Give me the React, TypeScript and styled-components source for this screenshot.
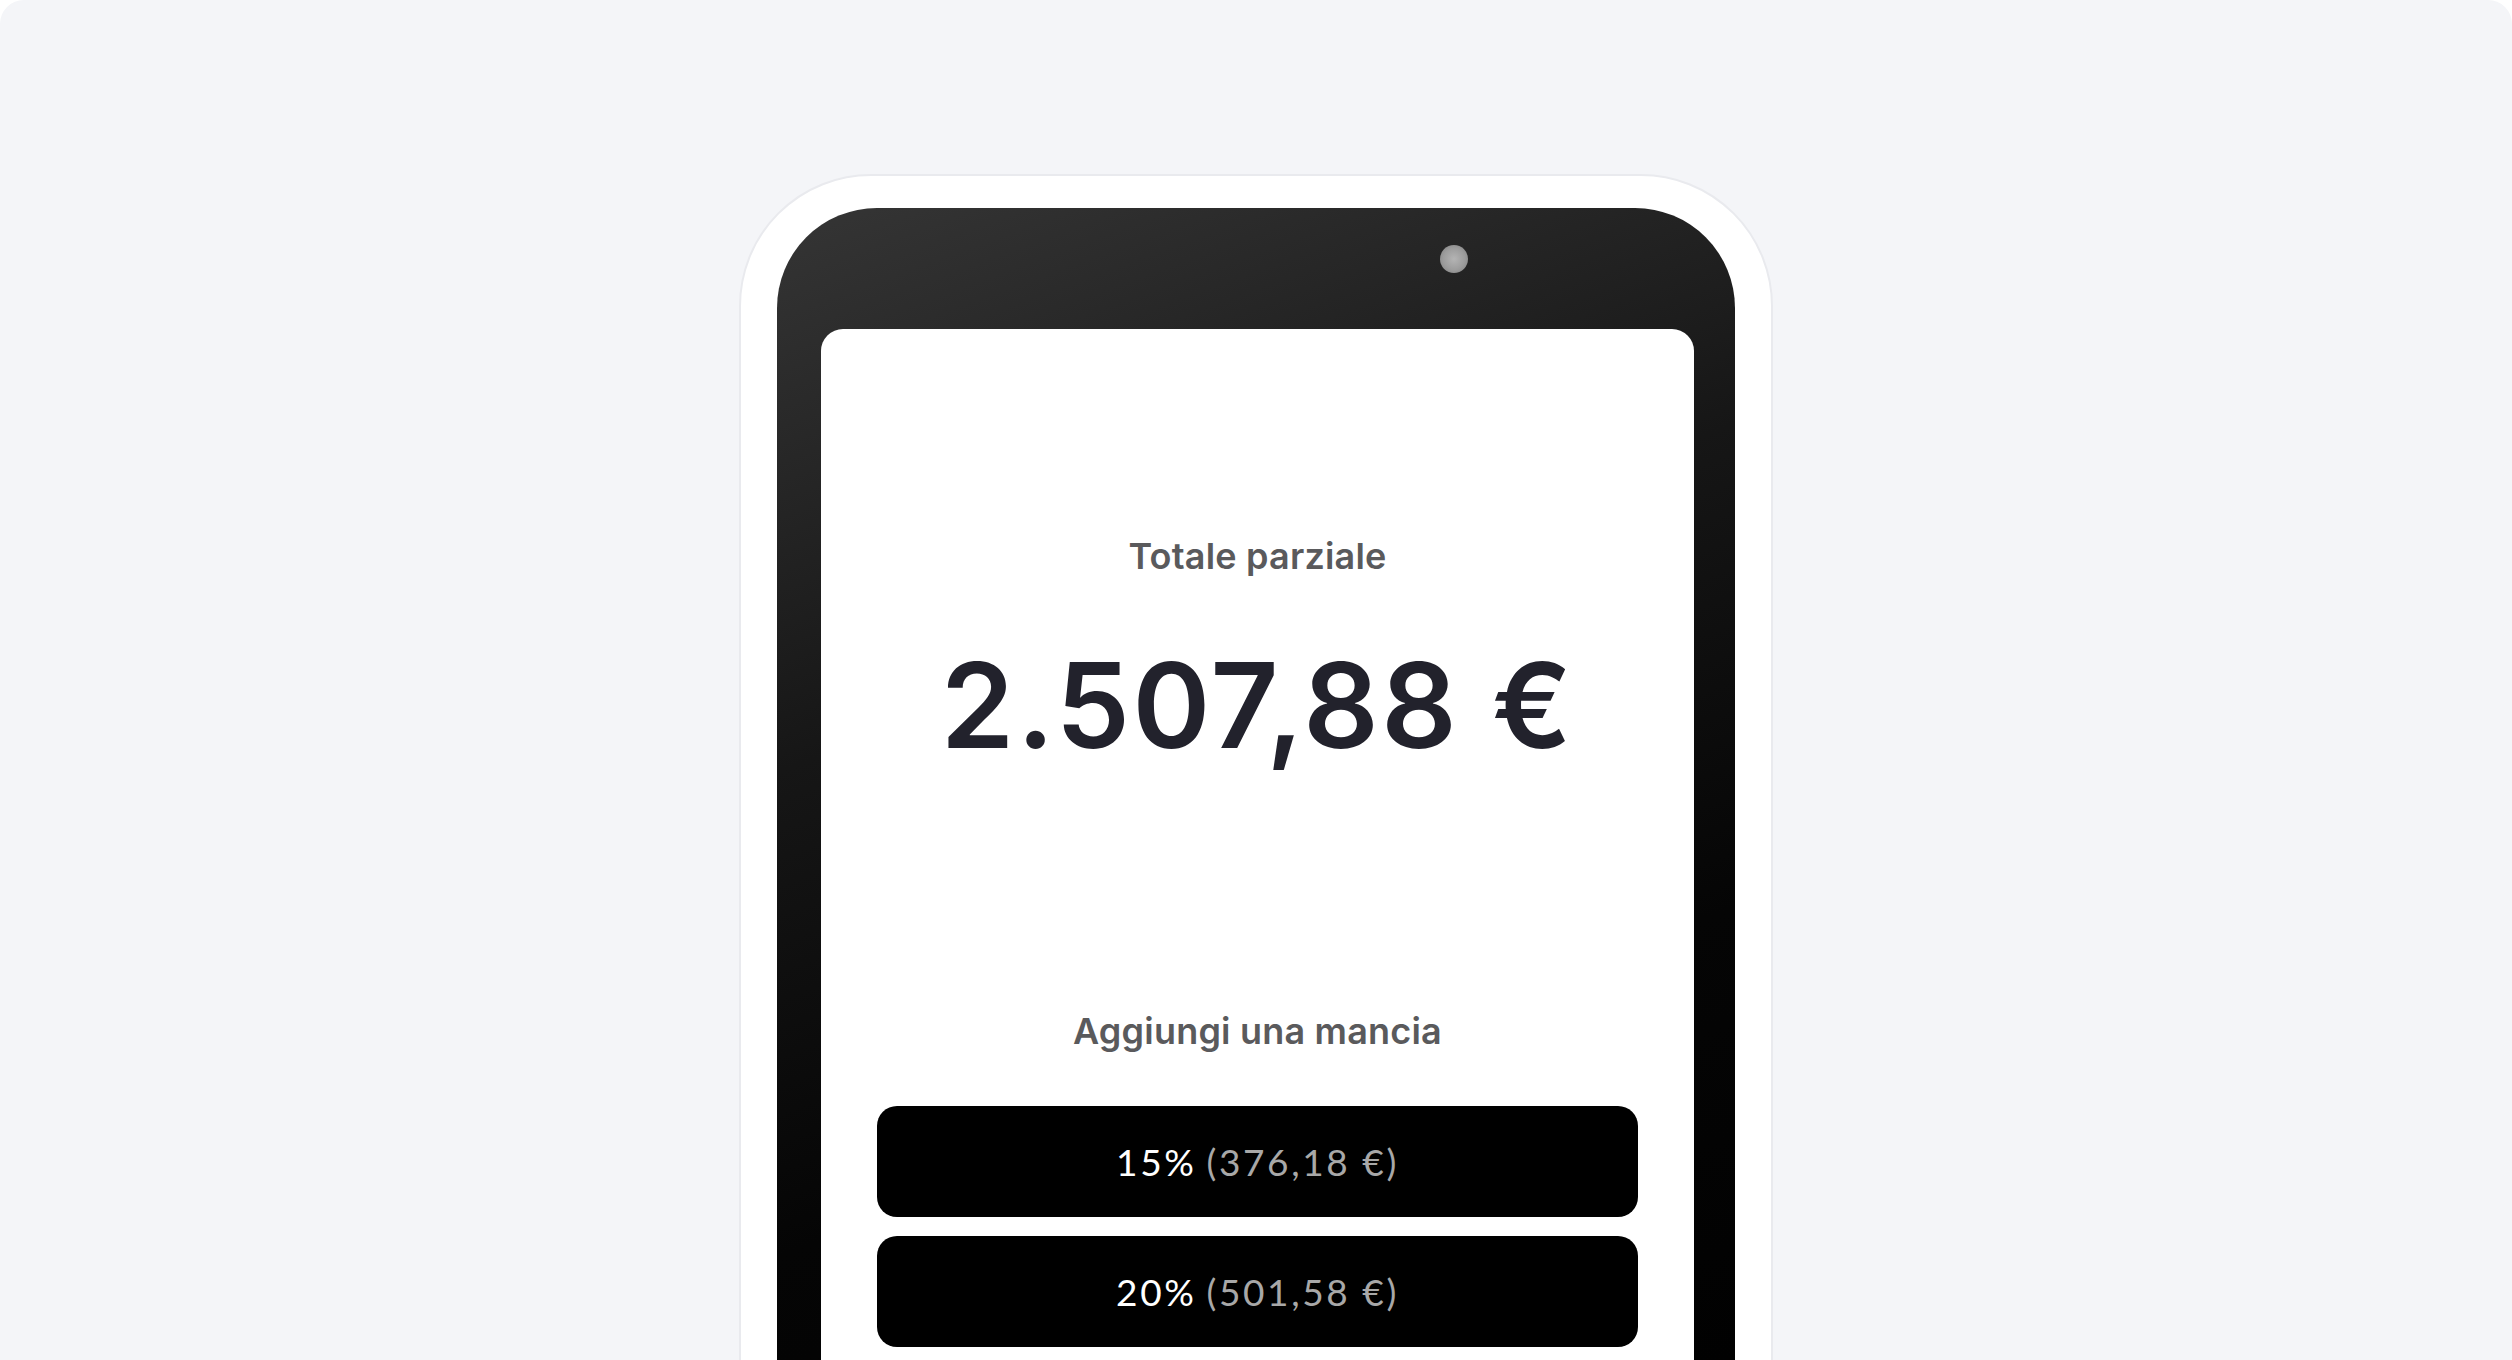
import React from "react";
import styled, { createGlobalStyle } from "styled-components";

const Global = createGlobalStyle`
  html, body { margin: 0; padding: 0; background: #ffffff; }
  body { font-family: Inter, "Noto Sans", sans-serif; }
  #root { width: 2512px; height: 1360px; }
`;

const Stage = styled.div`
  width: 2512px;
  height: 1360px;
  box-sizing: border-box;
  background: #f4f5f8;
  border-radius: 24px 24px 0 0;
  overflow: hidden;
  display: flex;
  justify-content: center;
  padding-top: 174px;
`;

const OuterShell = styled.div`
  width: 1034px;
  height: 1300px;
  flex-shrink: 0;
  box-sizing: border-box;
  background: #ffffff;
  border: 2px solid #e9eaee;
  border-radius: 132px 132px 0 0;
  padding: 32px 36px 0 36px;
  display: flex;
`;

const Body = styled.div`
  flex: 1;
  position: relative;
  border-radius: 100px 100px 0 0;
  background: linear-gradient(160deg, #353535 0%, #161616 35%, #050505 65%, #000 100%);
  padding: 121px 41px 0 44px;
  display: flex;
`;

const Camera = styled.div`
  position: absolute;
  top: 37px;
  right: 267px;
  width: 28px;
  height: 28px;
  border-radius: 50%;
  background: radial-gradient(circle at 50% 50%, #b4b4b4 0%, #9c9c9c 55%, #7a7a7a 100%);
`;

const Screen = styled.div`
  flex: 1;
  background: #ffffff;
  border-radius: 22px 22px 0 0;
  padding: 204px 56px 0 56px;
  display: flex;
  flex-direction: column;
  align-items: center;
`;

const Label = styled.div<{ $mt?: number }>`
  margin-top: ${(p) => p.$mt ?? 0}px;
  font-family: Inter, "Noto Sans", sans-serif;
  font-weight: 600;
  font-size: 36px;
  line-height: 46px;
  color: #5a5a5c;
  letter-spacing: 0.2px;
`;

const Amount = styled.div`
  margin-top: 61px;
  font-family: Inter, "Noto Sans", sans-serif;
  font-weight: 600;
  font-size: 118px;
  line-height: 130px;
  color: #22222c;
  letter-spacing: 2.5px;
`;

const TipList = styled.div`
  margin-top: 52px;
  align-self: stretch;
  display: flex;
  flex-direction: column;
  gap: 19px;
`;

const TipButton = styled.button`
  height: 111px;
  border: none;
  border-radius: 20px;
  background: #000000;
  color: #ffffff;
  display: flex;
  align-items: center;
  justify-content: center;
  font-family: Lato, "Noto Sans", sans-serif;
  font-weight: 400;
  font-size: 37px;
  letter-spacing: 2.6px;
  cursor: pointer;
`;

const Sub = styled.span`
  color: #a8a8a8;
  margin-left: 10px;
`;

const tips = [
  { pct: "15%", amt: "(376,18 €)" },
  { pct: "20%", amt: "(501,58 €)" },
];

export default function App() {
  return (
    <>
      <Global />
      <Stage>
        <OuterShell>
          <Body>
            <Camera />
            <Screen>
              <Label>Totale parziale</Label>
              <Amount>2.507,88 €</Amount>
              <Label $mt={238}>Aggiungi una mancia</Label>
              <TipList>
                {tips.map((t) => (
                  <TipButton key={t.pct}>
                    {t.pct}
                    <Sub>{t.amt}</Sub>
                  </TipButton>
                ))}
              </TipList>
            </Screen>
          </Body>
        </OuterShell>
      </Stage>
    </>
  );
}
